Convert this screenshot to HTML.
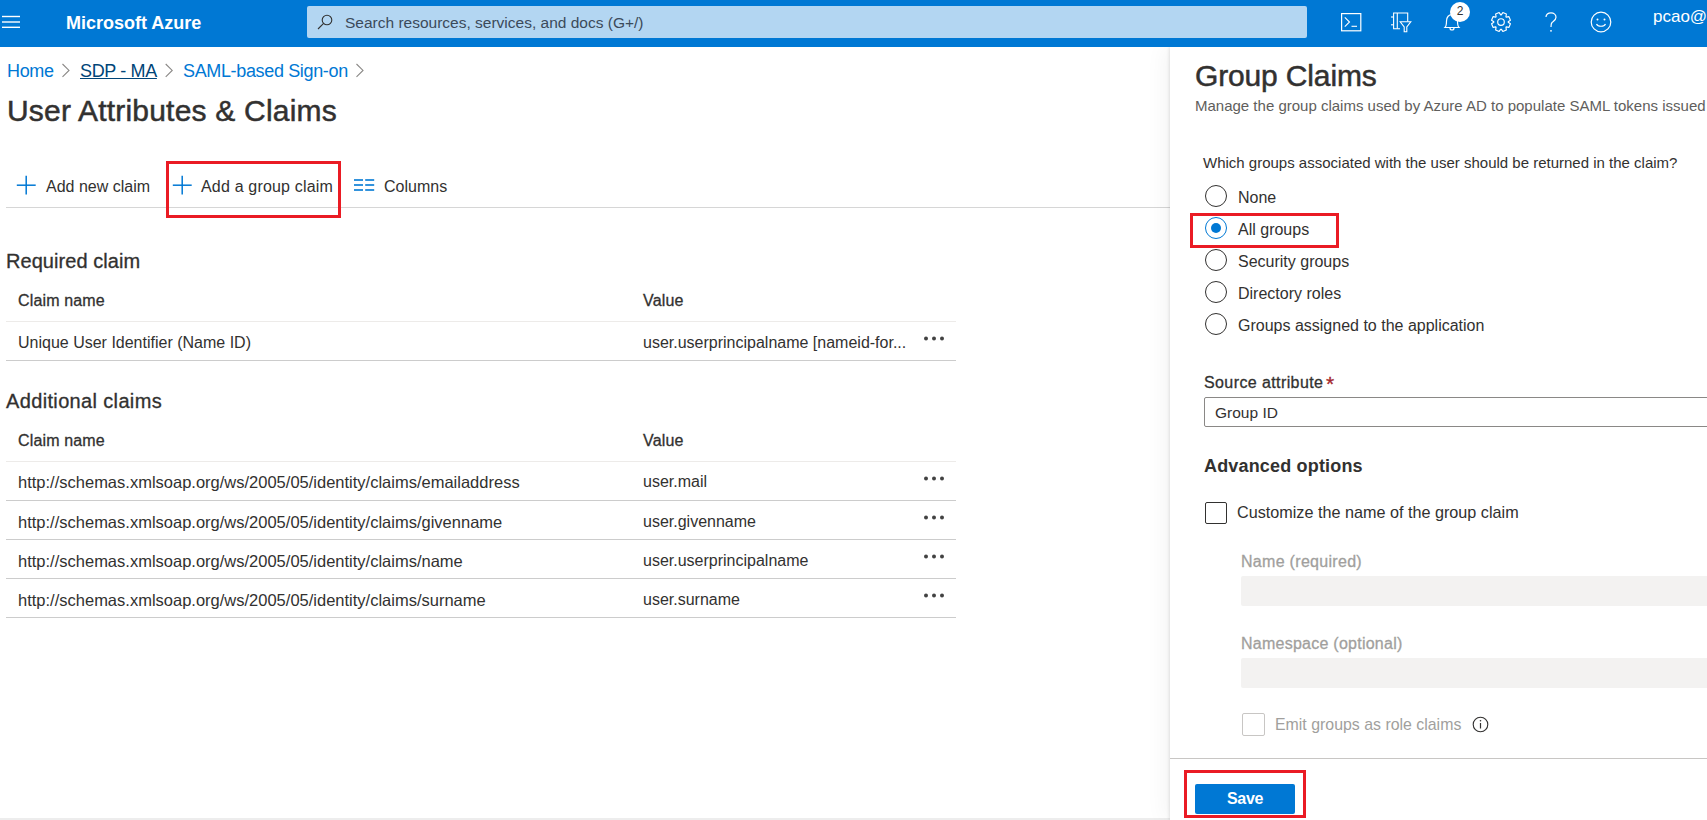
<!DOCTYPE html>
<html><head><meta charset="utf-8">
<style>
*{box-sizing:border-box;margin:0;padding:0}
html,body{width:1707px;height:820px;overflow:hidden;background:#fff;font-family:"Liberation Sans",sans-serif;color:#323130}
.abs{position:absolute;white-space:nowrap}
#top{position:absolute;left:0;top:0;width:1707px;height:47px;background:#0078d4;z-index:10}
#search{position:absolute;left:307px;top:6px;width:1000px;height:32px;background:#b3d6f2;border-radius:2px}
.w{color:#fff}
.lnk{color:#0078d4}
.hdr{font-size:16px!important;letter-spacing:0.15px;-webkit-text-stroke:0.3px #323130}
.sb{-webkit-text-stroke:0.3px currentColor}
.line{position:absolute;height:1px;background:#edebe9}
.red{position:absolute;border:3px solid #ea1b24}
.radio{position:absolute;width:22px;height:22px;border:1px solid #323130;border-radius:50%}
.cb{position:absolute;width:23px;height:23px;border:1px solid #323130;border-radius:2px}
.dots{position:absolute;width:22px;height:6px}
.dots i{position:absolute;top:0;width:5px;height:5px;border-radius:50%;background:#323130}
</style></head><body>
<div id="top">
  <svg class="abs" style="left:2px;top:15px" width="19" height="14" viewBox="0 0 19 14"><g stroke="#fff" stroke-width="1.4"><line x1="0" y1="1.5" x2="18" y2="1.5"/><line x1="0" y1="7" x2="18" y2="7"/><line x1="0" y1="12.3" x2="18" y2="12.3"/></g></svg>
  <div class="abs w" style="left:66px;top:13px;font-size:18px;font-weight:bold">Microsoft Azure</div>
  <div id="search">
    <svg class="abs" style="left:10px;top:8px" width="16" height="16" viewBox="0 0 16 16"><circle cx="10" cy="6" r="4.8" fill="none" stroke="#323130" stroke-width="1.1"/><line x1="6.6" y1="9.4" x2="1" y2="15" stroke="#323130" stroke-width="1.1"/></svg>
    <div class="abs" style="left:38px;top:8px;font-size:15.5px;color:#3b4a5a">Search resources, services, and docs (G+/)</div>
  </div>
  <!-- cloud shell -->
  <svg class="abs" style="left:1335px;top:5px" width="30" height="30" viewBox="0 0 30 30"><rect x="6.6" y="8.6" width="19.2" height="17.2" fill="none" stroke="#fff" stroke-width="1.2"/><polyline points="9.8,12.3 14.5,17 9.8,21.7" fill="none" stroke="#fff" stroke-width="1.1"/><line x1="16.5" y1="21.3" x2="22" y2="21.3" stroke="#fff" stroke-width="1.1"/></svg>
  <!-- directory filter -->
  <svg class="abs" style="left:1385px;top:5px" width="30" height="30" viewBox="0 0 30 30"><g fill="none" stroke="#fff" stroke-width="1.1"><path d="M15 23.7 H8.6 V8 H22.7 V16.6"/><line x1="12.3" y1="8" x2="12.3" y2="23.7"/><line x1="6" y1="12" x2="8.6" y2="12"/><line x1="6" y1="19.8" x2="8.6" y2="19.8"/><path d="M15.2 16.8 H25.8 L21.8 22 V26.8 H19.2 V22 Z"/></g></svg>
  <!-- bell -->
  <svg class="abs" style="left:1442px;top:11px" width="20" height="22" viewBox="0 0 20 22"><path d="M3 16.5 C4.5 15 4.5 13 4.5 10 C4.5 6 7 3.5 10 3.5 C13 3.5 15.5 6 15.5 10 C15.5 13 15.5 15 17 16.5 Z" fill="none" stroke="#fff" stroke-width="1.2"/><path d="M8 17 A2 2 0 0 0 12 17" fill="none" stroke="#fff" stroke-width="1.2"/></svg>
  <div class="abs" style="left:1450px;top:2px;width:20px;height:20px;border-radius:50%;background:#fff"></div>
  <div class="abs" style="left:1450px;top:4px;width:20px;text-align:center;font-size:12px;color:#323130">2</div>
  <!-- gear -->
  <svg class="abs" style="left:1490px;top:11px" width="22" height="22" viewBox="0 0 22 22"><g fill="none" stroke="#fff" stroke-width="1.15" stroke-linejoin="round"><path d="M11.24 3.80 L12.84 1.58 L16.36 3.04 L15.92 5.75 L16.25 6.08 L18.96 5.64 L20.42 9.16 L18.20 10.76 L18.20 11.24 L20.42 12.84 L18.96 16.36 L16.25 15.92 L15.92 16.25 L16.36 18.96 L12.84 20.42 L11.24 18.20 L10.76 18.20 L9.16 20.42 L5.64 18.96 L6.08 16.25 L5.75 15.92 L3.04 16.36 L1.58 12.84 L3.80 11.24 L3.80 10.76 L1.58 9.16 L3.04 5.64 L5.75 6.08 L6.08 5.75 L5.64 3.04 L9.16 1.58 L10.76 3.80 Z"/><circle cx="11" cy="11" r="3.3"/></g></svg>
  <!-- help -->
  <svg class="abs" style="left:1543px;top:11px" width="16" height="22" viewBox="0 0 16 22"><path d="M3 6 C3 3.5 5 1.8 8 1.8 C11 1.8 13 3.8 13 6.2 C13 9 10.5 10 9 11.5 C8.2 12.3 8 13.5 8 16" fill="none" stroke="#fff" stroke-width="1.2"/><circle cx="8" cy="19.8" r="0.9" fill="#fff"/></svg>
  <!-- smiley -->
  <svg class="abs" style="left:1590px;top:11px" width="22" height="22" viewBox="0 0 22 22"><circle cx="11" cy="11" r="9.8" fill="none" stroke="#fff" stroke-width="1.2"/><circle cx="7.5" cy="8.5" r="1" fill="#fff"/><circle cx="14.5" cy="8.5" r="1" fill="#fff"/><path d="M6.5 13 C8 16 14 16 15.5 13" fill="none" stroke="#fff" stroke-width="1.2"/></svg>
  <div class="abs w" style="left:1653px;top:7px;font-size:17px">pcao@</div>
</div>

<!-- left content -->
<div class="abs lnk" style="left:7px;top:61px;font-size:18px;letter-spacing:-0.35px">Home</div>
<div class="abs" style="left:80px;top:61px;font-size:18px;letter-spacing:-0.35px;color:#004578;text-decoration:underline">SDP - MA</div>
<div class="abs lnk" style="left:183px;top:61px;font-size:18px;letter-spacing:-0.35px">SAML-based Sign-on</div>
<div class="abs" style="left:7px;top:94px;font-size:30px;letter-spacing:0.2px;-webkit-text-stroke:0.5px #323130">User Attributes &amp; Claims</div>

<div class="abs" style="left:46px;top:178px;font-size:16px">Add new claim</div>
<div class="abs" style="left:201px;top:178px;font-size:16px;letter-spacing:0.18px">Add a group claim</div>
<div class="abs" style="left:384px;top:178px;font-size:16px">Columns</div>
<div class="line" style="left:6px;top:207px;width:1164px;background:#d6d6d6"></div>

<div class="abs" style="left:6px;top:250px;font-size:20px;letter-spacing:0.05px;-webkit-text-stroke:0.3px #323130">Required claim</div>
<div class="abs hdr" style="left:18px;top:292px;font-size:16px">Claim name</div>
<div class="abs hdr" style="left:643px;top:292px;font-size:16px">Value</div>
<div class="line" style="left:6px;top:321px;width:950px"></div>
<div class="abs" style="left:18px;top:334px;font-size:16px">Unique User Identifier (Name ID)</div>
<div class="abs" style="left:643px;top:334px;font-size:16px">user.userprincipalname [nameid-for...</div>
<div class="line" style="left:6px;top:360px;width:950px;background:#cccccc"></div>

<div class="abs" style="left:6px;top:390px;font-size:20px;letter-spacing:0.35px;-webkit-text-stroke:0.3px #323130">Additional claims</div>
<div class="abs hdr" style="left:18px;top:432px;font-size:16px">Claim name</div>
<div class="abs hdr" style="left:643px;top:432px;font-size:16px">Value</div>
<div class="line" style="left:6px;top:461px;width:950px"></div>
<div class="abs" style="left:18px;top:473px;font-size:16.5px">http://schemas.xmlsoap.org/ws/2005/05/identity/claims/emailaddress</div>
<div class="abs" style="left:643px;top:473px;font-size:16px">user.mail</div>
<div class="line" style="left:6px;top:500px;width:950px;background:#cccccc"></div>
<div class="abs" style="left:18px;top:513px;font-size:16.5px">http://schemas.xmlsoap.org/ws/2005/05/identity/claims/givenname</div>
<div class="abs" style="left:643px;top:513px;font-size:16px">user.givenname</div>
<div class="line" style="left:6px;top:539px;width:950px;background:#cccccc"></div>
<div class="abs" style="left:18px;top:552px;font-size:16.5px">http://schemas.xmlsoap.org/ws/2005/05/identity/claims/name</div>
<div class="abs" style="left:643px;top:552px;font-size:16px">user.userprincipalname</div>
<div class="line" style="left:6px;top:578px;width:950px;background:#cccccc"></div>
<div class="abs" style="left:18px;top:591px;font-size:16.5px">http://schemas.xmlsoap.org/ws/2005/05/identity/claims/surname</div>
<div class="abs" style="left:643px;top:591px;font-size:16px">user.surname</div>
<div class="line" style="left:6px;top:617px;width:950px;background:#cccccc"></div>

<svg class="abs" style="left:0;top:0" width="1170" height="820" viewBox="0 0 1170 820">
<g stroke="#8a8886" stroke-width="1.1" fill="none"><polyline points="62.5,64 69,70.4 62.5,76.8"/><polyline points="165.7,64 172.2,70.4 165.7,76.8"/><polyline points="356.5,64 363,70.4 356.5,76.8"/></g>
<g stroke="#0078d4" stroke-width="1.5"><line x1="26.2" y1="175.7" x2="26.2" y2="194.6"/><line x1="16.8" y1="185.2" x2="35.7" y2="185.2"/><line x1="182.2" y1="175.7" x2="182.2" y2="194.6"/><line x1="172.8" y1="185.2" x2="191.7" y2="185.2"/></g>
<g stroke="#0078d4" stroke-width="1.6"><line x1="354" y1="180" x2="363" y2="180"/><line x1="354" y1="185" x2="363" y2="185"/><line x1="354" y1="190" x2="363" y2="190"/><line x1="365.2" y1="180" x2="374.2" y2="180"/><line x1="365.2" y1="185" x2="374.2" y2="185"/><line x1="365.2" y1="190" x2="374.2" y2="190"/></g>
<g fill="#424242">
<circle cx="926" cy="338.5" r="2"/><circle cx="934" cy="338.5" r="2"/><circle cx="942" cy="338.5" r="2"/>
<circle cx="926" cy="478.5" r="2"/><circle cx="934" cy="478.5" r="2"/><circle cx="942" cy="478.5" r="2"/>
<circle cx="926" cy="517.5" r="2"/><circle cx="934" cy="517.5" r="2"/><circle cx="942" cy="517.5" r="2"/>
<circle cx="926" cy="556.5" r="2"/><circle cx="934" cy="556.5" r="2"/><circle cx="942" cy="556.5" r="2"/>
<circle cx="926" cy="595.5" r="2"/><circle cx="934" cy="595.5" r="2"/><circle cx="942" cy="595.5" r="2"/>
</g>
</svg>
<div class="red" style="left:166px;top:161px;width:175px;height:57px"></div>
<div class="abs" style="left:0;top:818px;width:1170px;height:2px;background:#ededed"></div>
<!-- panel -->
<div class="abs" style="left:1170px;top:47px;width:537px;height:773px;background:#fff;box-shadow:-1px 0 3px rgba(0,0,0,0.10),-6px 0 20px rgba(0,0,0,0.045)"></div>
<div class="abs" style="left:1195px;top:59px;font-size:30px;letter-spacing:-0.15px;-webkit-text-stroke:0.5px #323130">Group Claims</div>
<div class="abs" style="left:1195px;top:97px;font-size:15px;color:#605e5c">Manage the group claims used by Azure AD to populate SAML tokens issued</div>
<div class="abs" style="left:1203px;top:154px;font-size:15px">Which groups associated with the user should be returned in the claim?</div>
<div class="radio" style="left:1205px;top:185px"></div>
<div class="abs" style="left:1238px;top:189px;font-size:16px">None</div>
<div class="radio" style="left:1205px;top:217px;border-color:#0078d4"><i style="position:absolute;left:5px;top:5px;width:10px;height:10px;border-radius:50%;background:#0078d4"></i></div>
<div class="abs" style="left:1238px;top:221px;font-size:16px">All groups</div>
<div class="radio" style="left:1205px;top:249px"></div>
<div class="abs" style="left:1238px;top:253px;font-size:16px">Security groups</div>
<div class="radio" style="left:1205px;top:281px"></div>
<div class="abs" style="left:1238px;top:285px;font-size:16px">Directory roles</div>
<div class="radio" style="left:1205px;top:313px"></div>
<div class="abs" style="left:1238px;top:317px;font-size:16px">Groups assigned to the application</div>
<div class="red" style="left:1190px;top:213px;width:149px;height:35px"></div>

<div class="abs" style="left:1204px;top:374px;font-size:16px;letter-spacing:0.4px;-webkit-text-stroke:0.3px #323130">Source attribute</div>
<div class="abs" style="left:1326px;top:372px;font-size:21px;color:#a4262c;-webkit-text-stroke:0.3px #a4262c">*</div>
<div class="abs" style="left:1204px;top:397px;width:520px;height:30px;border:1px solid #8a8886;border-radius:2px"></div>
<div class="abs" style="left:1215px;top:404px;font-size:15.5px">Group ID</div>
<div class="abs" style="left:1204px;top:456px;font-size:18px;font-weight:bold;letter-spacing:0.17px">Advanced options</div>
<div class="cb" style="left:1205px;top:502px;width:22px;height:22px"></div>
<div class="abs" style="left:1237px;top:503px;font-size:16.2px">Customize the name of the group claim</div>
<div class="abs" style="left:1241px;top:553px;font-size:16px;letter-spacing:0.3px;-webkit-text-stroke:0.3px #a19f9d;color:#a19f9d">Name (required)</div>
<div class="abs" style="left:1241px;top:576px;width:480px;height:30px;background:#f3f2f1;border-radius:2px"></div>
<div class="abs" style="left:1241px;top:635px;font-size:16px;letter-spacing:0.25px;-webkit-text-stroke:0.3px #a19f9d;color:#a19f9d">Namespace (optional)</div>
<div class="abs" style="left:1241px;top:658px;width:480px;height:30px;background:#f3f2f1;border-radius:2px"></div>
<div class="cb" style="left:1242px;top:713px;width:23px;height:23px;border-color:#c8c6c4"></div>
<div class="abs" style="left:1275px;top:716px;font-size:15.9px;color:#a19f9d">Emit groups as role claims</div>
<svg class="abs" style="left:1472px;top:716px" width="17" height="17" viewBox="0 0 17 17"><circle cx="8.5" cy="8.5" r="7.3" fill="none" stroke="#323130" stroke-width="1.1"/><line x1="8.5" y1="7" x2="8.5" y2="12.5" stroke="#323130" stroke-width="1.2"/><circle cx="8.5" cy="4.8" r="0.8" fill="#323130"/></svg>
<div class="line" style="left:1170px;top:758px;width:537px;background:#c8c6c4"></div>
<div class="abs" style="left:1195px;top:784px;width:100px;height:30px;background:#0078d4;border-radius:2px"></div>
<div class="abs" style="left:1195px;top:790px;width:100px;text-align:center;font-size:16px;letter-spacing:-0.3px;font-weight:bold;color:#fff">Save</div>
<div class="red" style="left:1184px;top:770px;width:122px;height:48px"></div>
</body></html>
